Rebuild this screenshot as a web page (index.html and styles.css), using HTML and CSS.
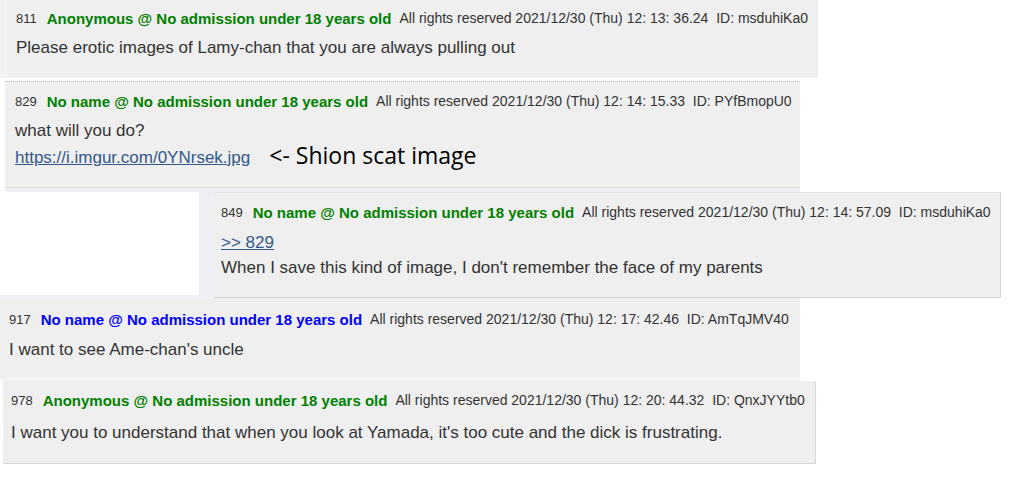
FILE: index.html
```html
<!DOCTYPE html>
<html lang="en">
<head>
<meta charset="utf-8">
<title>Thread</title>
<link rel="stylesheet" href="styles.css">
</head>
<body>
<main class="page">
  <section class="shot shot-1">
    <article class="post post-1">
      <header class="post-head"><span class="num">811</span><span class="name green">Anonymous @ No admission under 18 years old</span><span class="info">All rights reserved 2021/12/30 (Thu) 12: 13: 36.24&nbsp; ID: msduhiKa0</span></header>
      <p class="line">Please erotic images of Lamy-chan that you are always pulling out</p>
    </article>
  </section>

  <section class="shot shot-2">
    <article class="post post-2">
      <header class="post-head"><span class="num">829</span><span class="name green">No name @ No admission under 18 years old</span><span class="info">All rights reserved 2021/12/30 (Thu) 12: 14: 15.33&nbsp; ID: PYfBmopU0</span></header>
      <p class="line">what will you do?</p>
      <p class="line"><a class="link" href="#">https://i.imgur.com/0YNrsek.jpg</a><span class="note">&lt;- Shion scat image</span></p>
    </article>
  </section>

  <section class="shot shot-3">
    <div class="blank"></div>
    <article class="post post-3">
      <header class="post-head"><span class="num">849</span><span class="name green">No name @ No admission under 18 years old</span><span class="info">All rights reserved 2021/12/30 (Thu) 12: 14: 57.09&nbsp; ID: msduhiKa0</span></header>
      <p class="line"><a class="link" href="#">&gt;&gt; 829</a></p>
      <p class="line">When I save this kind of image, I don't remember the face of my parents</p>
    </article>
  </section>

  <section class="shot shot-4">
    <article class="post post-4">
      <header class="post-head"><span class="num">917</span><span class="name blue">No name @ No admission under 18 years old</span><span class="info">All rights reserved 2021/12/30 (Thu) 12: 17: 42.46&nbsp; ID: AmTqJMV40</span></header>
      <p class="line">I want to see Ame-chan's uncle</p>
    </article>
  </section>

  <section class="shot shot-5">
    <article class="post post-5">
      <header class="post-head"><span class="num">978</span><span class="name green">Anonymous @ No admission under 18 years old</span><span class="info">All rights reserved 2021/12/30 (Thu) 12: 20: 44.32&nbsp; ID: QnxJYYtb0</span></header>
      <p class="line">I want you to understand that when you look at Yamada, it's too cute and the dick is frustrating.</p>
    </article>
  </section>
</main>
</body>
</html>
```

FILE: styles.css
```css
* { box-sizing: border-box; }

html, body {
  margin: 0;
  padding: 0;
  background: #ffffff;
}

body {
  font-family: "Liberation Sans", Arial, sans-serif;
  color: #333333;
  width: 1010px;
  height: 477px;
  overflow: hidden;
}

.page {
  display: flex;
  flex-direction: column;
}

.shot {
  display: flex;
}

.post {
  background: #efefef;
}

.post-head {
  display: flex;
  align-items: center;
  height: 20px;
  white-space: nowrap;
}

.num {
  font-size: 13px;
}

.name {
  font-size: 15px;
  font-weight: bold;
  margin-left: 10px;
}

.green { color: #008000; }
.blue { color: #0000ff; }

.info {
  font-size: 14px;
  margin-left: 8px;
}

.line {
  margin: 0;
  font-size: 17px;
  line-height: 26px;
  white-space: nowrap;
}

.link {
  color: #34588a;
  text-decoration: underline;
}

.note {
  font-family: "Open Sans", "Noto Sans", sans-serif;
  font-size: 23px;
  line-height: 22px;
  color: #000000;
  margin-left: 19px;
  vertical-align: -1px;
}

/* shot 1 */
.shot-1 {
  width: 818px;
  height: 78px;
  padding-left: 7px;
  background: #f3f3f6;
}
.post-1 {
  width: 811px;
  height: 77px;
  padding: 8px 0 0 9px;
}
.post-1 .line { margin-top: 7px; }

/* shot 2 */
.shot-2 {
  width: 800px;
  margin-top: 3px;
  padding-left: 5px;
}
.post-2 {
  width: 795px;
  height: 111px;
  padding: 9px 0 0 10px;
  border-top: 1px dotted #c4c4c4;
  border-bottom: 4px solid #f0f0f4;
  box-shadow: inset 0 -1px 0 #dcdcdc;
}
.post-2 .post-head { margin-bottom: 7px; }

/* shot 3 */
.shot-3 {
  height: 108px;
  gap: 14px;
  background: linear-gradient(90deg, #f0f0f4 0, #f0f0f4 800px, #ffffff 800px);
}
.blank {
  width: 199px;
  margin-bottom: 5px;
  background: #ffffff;
}
.post-3 {
  width: 788px;
  height: 106px;
  padding: 9px 0 0 8px;
  border-top: 1px solid #e6e6e6;
  border-right: 1px solid #d6d6d6;
  border-bottom: 1px solid #d6d6d6;
}
.post-3 .post-head { margin-bottom: 8px; }
.post-3 .line { line-height: 25px; }

/* shot 4 */
.shot-4 {
  width: 800px;
  height: 81px;
  background: #f3f3f6;
}
.post-4 {
  width: 800px;
  height: 78px;
  padding: 9px 0 0 9px;
}
.post-4 .line { margin-top: 8px; }

/* shot 5 */
.shot-5 {
  width: 816px;
  padding-left: 3px;
}
.post-5 {
  width: 813px;
  height: 83px;
  padding: 9px 0 0 8px;
  border-right: 1px solid #d8d8d8;
  border-bottom: 1px solid #d8d8d8;
}
.post-5 .line { margin-top: 10px; }
```
